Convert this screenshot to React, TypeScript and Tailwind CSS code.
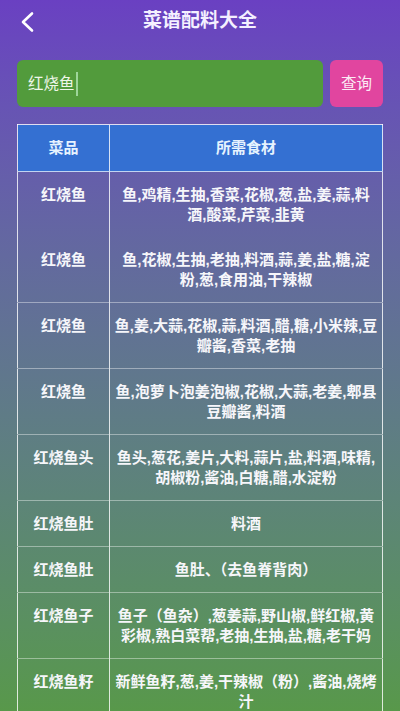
import React from 'react';

type Row = { name: string; items: string; joinNext?: boolean };

const rows: Row[] = [
  { name: '红烧鱼', items: '鱼,鸡精,生抽,香菜,花椒,葱,盐,姜,蒜,料酒,酸菜,芹菜,韭黄', joinNext: true },
  { name: '红烧鱼', items: '鱼,花椒,生抽,老抽,料酒,蒜,姜,盐,糖,淀粉,葱,食用油,干辣椒' },
  { name: '红烧鱼', items: '鱼,姜,大蒜,花椒,蒜,料酒,醋,糖,小米辣,豆瓣酱,香菜,老抽' },
  { name: '红烧鱼', items: '鱼,泡萝卜泡姜泡椒,花椒,大蒜,老姜,郫县豆瓣酱,料酒' },
  { name: '红烧鱼头', items: '鱼头,葱花,姜片,大料,蒜片,盐,料酒,味精,胡椒粉,酱油,白糖,醋,水淀粉' },
  { name: '红烧鱼肚', items: '料酒' },
  { name: '红烧鱼肚', items: '鱼肚、（去鱼脊背肉）' },
  { name: '红烧鱼子', items: '鱼子（鱼杂）,葱姜蒜,野山椒,鲜红椒,黄彩椒,熟白菜帮,老抽,生抽,盐,糖,老干妈' },
  { name: '红烧鱼籽', items: '新鲜鱼籽,葱,姜,干辣椒（粉）,酱油,烧烤汁' },
];

const BackIcon = () => (
  <svg width="16" height="22" viewBox="0 0 16 22" fill="none">
    <path d="M13 2.5 L4 11 L13 19.5" stroke="white" strokeWidth="2.6" strokeLinecap="round" strokeLinejoin="round" />
  </svg>
);

const App: React.FC = () => {
  return (
    <div className="h-screen overflow-hidden bg-linear-to-b from-[#6a40c2] to-[#58984a] font-['Liberation_Sans','Noto_Sans_CJK_SC',sans-serif] text-white">
      <div className="relative flex h-[42px] items-center justify-center">
        <button className="absolute left-[19px] top-[11px]">
          <BackIcon />
        </button>
        <h1 className="text-[19px] font-bold text-[#f4f0ff]">菜谱配料大全</h1>
      </div>

      <div className="mt-[18px] flex h-[47px] gap-[7px] px-[17px]">
        <div className="flex flex-1 items-center rounded-md bg-[#529b3c] px-[11px]">
          <span className="text-[15.5px] text-[#eef6e8]">红烧鱼</span>
          <span className="ml-[1px] h-[24px] w-[2px] bg-[#9ed69a]" />
        </div>
        <button className="w-[53px] rounded-md bg-[#e1459f] text-[15.5px] text-[#fbeaf4]">查询</button>
      </div>

      <div className="mx-[17px] mt-[17px]">
        <table className="w-full table-fixed border-collapse border border-white/80 text-[15px] font-bold">
          <colgroup>
            <col className="w-[92px]" />
            <col />
          </colgroup>
          <thead>
            <tr className="h-[47px] bg-[#3470d2] text-[#e6f3ff]">
              <th className="border-r border-white/80 font-bold">菜品</th>
              <th className="font-bold">所需食材</th>
            </tr>
          </thead>
          <tbody className="text-[#f6f6fa]">
            {rows.map((r, i) => (
              <tr
                key={i}
                className={
                  r.joinNext ? 'border-t border-white/70' : rows[i - 1]?.joinNext ? '' : 'border-t border-white/40'
                }
              >
                <td className="border-r border-white/80 py-[12.5px] text-center align-top leading-5">{r.name}</td>
                <td className="px-1 py-[12.5px] text-center align-top leading-5">{r.items}</td>
              </tr>
            ))}
          </tbody>
        </table>
      </div>
    </div>
  );
};

export default App;
